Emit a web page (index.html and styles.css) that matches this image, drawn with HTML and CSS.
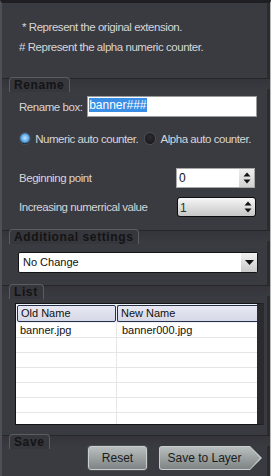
FILE: index.html
```html
<!DOCTYPE html>
<html lang="en">
<head>
    <meta charset="UTF-8">
    <meta name="viewport" content="width=device-width, initial-scale=1.0">
    <title>Rename</title>
    <link rel="stylesheet" href="styles.css">
</head>
<body>
    <div class="panel">
        <div class="notes">
            <p class="note note-star">* Represent the original extension.</p>
            <p class="note"># Represent the alpha numeric counter.</p>
        </div>

        <div class="section-head"><span class="tab">Rename</span></div>
        <div class="section rename">
            <div class="field-row">
                <span class="label">Rename box:</span>
                <div class="text-input"><span class="selected">banner###</span></div>
            </div>
            <div class="radio-row">
                <span class="radio on"></span><span class="radio-label">Numeric auto counter.</span>
                <span class="radio"></span><span class="radio-label">Alpha auto counter.</span>
            </div>
            <div class="spin-row begin-row">
                <span class="label">Beginning point</span>
                <div class="spin spin-white">
                    <span class="spin-val">0</span>
                    <span class="spin-btn">
                        <svg width="8" height="12" viewBox="0 0 8 12"><path d="M4 0.5 L7.5 4.5 H0.5 Z M4 11.5 L7.5 7.5 H0.5 Z" fill="#111"/></svg>
                    </span>
                </div>
            </div>
            <div class="spin-row step-row">
                <span class="label">Increasing numerrical value</span>
                <div class="spin spin-gray">
                    <span class="spin-val green">1</span>
                    <span class="spin-btn">
                        <svg width="8" height="12" viewBox="0 0 8 12"><path d="M4 0.5 L7.5 4.5 H0.5 Z M4 11.5 L7.5 7.5 H0.5 Z" fill="#111"/></svg>
                    </span>
                </div>
            </div>
        </div>

        <div class="section-head"><span class="tab">Additional settings</span></div>
        <div class="section additional">
            <div class="select">
                <span class="select-val">No Change</span>
                <span class="select-btn">
                    <svg width="9" height="5" viewBox="0 0 9 5"><path d="M0 0 H9 L4.5 5 Z" fill="#111"/></svg>
                </span>
            </div>
        </div>

        <div class="section-head"><span class="tab">List</span></div>
        <div class="section list">
            <div class="list-box">
                <div class="list-header">
                    <span class="head-cell col-old">Old Name</span>
                    <span class="head-cell col-new">New Name</span>
                </div>
                <div class="list-row">
                    <span class="cell col-old">banner.jpg</span>
                    <span class="cell col-new">banner000.jpg</span>
                </div>
                <div class="list-row"><span class="cell col-old"></span><span class="cell col-new"></span></div>
                <div class="list-row"><span class="cell col-old"></span><span class="cell col-new"></span></div>
                <div class="list-row"><span class="cell col-old"></span><span class="cell col-new"></span></div>
                <div class="list-row"><span class="cell col-old"></span><span class="cell col-new"></span></div>
                <div class="list-row"><span class="cell col-old"></span><span class="cell col-new"></span></div>
                <div class="list-row"><span class="cell col-old"></span><span class="cell col-new"></span></div>
            </div>
        </div>

        <div class="section-head"><span class="tab">Save</span></div>
        <div class="section save">
            <button class="btn">Reset</button>
            <div class="btn-arrow-wrap">
                <button class="btn-arrow">Save to Layer</button>
            </div>
        </div>
    </div>
</body>
</html>
```

FILE: styles.css
```css
body {
    margin: 0;
    padding: 0;
    background-color: #3a3a41;
}
.panel {
    width: 271px;
    height: 476px;
    box-sizing: border-box;
    background-color: #3a3a41;
    border-top: 3px solid #1f1f23;
    border-left: 2px solid #4f4f56;
    border-right: 1px solid #b8b8b8;
    box-shadow: inset -3px 0 0 #2b2b30;
    overflow: hidden;
    color: #d6d6d6;
    font-family: 'Liberation Sans', Arial, sans-serif;
    font-size: 11.5px;
    letter-spacing: -0.45px;
    white-space: nowrap;
}
.notes {
    padding: 14px 0 21px 17px;
    height: 75px;
    box-sizing: border-box;
}
.note {
    margin: 0;
    line-height: 20px;
    height: 20px;
}
.note-star {
    padding-left: 3px;
}
.section-head {
    border-top: 1px solid #26262b;
    height: 10px;
    padding-left: 7px;
    background: linear-gradient(#34343a, #393940);
}
.tab {
    display: inline-block;
    margin-top: -5px;
    height: 15px;
    box-sizing: border-box;
    padding: 1px 5px 0 4px;
    border: 1px solid #5b5b62;
    border-bottom: none;
    border-radius: 4px 4px 0 0;
    background-color: #36363d;
    color: #141414;
    font-weight: bold;
    font-size: 12px;
    letter-spacing: 0.6px;
    line-height: 13px;
}
.section {
    padding: 0 13px 0 15px;
}
.rename {
    padding-top: 7px;
    height: 141px;
    box-sizing: border-box;
}
.field-row {
    display: flex;
    align-items: center;
    height: 21px;
    padding-left: 2px;
}
.field-row .label {
    width: 69px;
}
.text-input {
    width: 172px;
    height: 21px;
    box-sizing: border-box;
    background-color: #fff;
    border: 1px solid #9a9a9a;
    padding: 2px 0 0 1px;
    font-size: 12px;
    letter-spacing: 0;
    line-height: 13px;
}
.selected {
    background-color: #3a8ee6;
    color: #fff;
}
.radio-row {
    display: flex;
    align-items: center;
    height: 13px;
    margin-top: 15px;
    padding-left: 2px;
}
.radio {
    width: 13px;
    height: 13px;
    box-sizing: border-box;
    border-radius: 50%;
    background: radial-gradient(circle at 50% 40%, #2c2c30, #151518);
    border: 1px solid #4a4a50;
    margin-right: 4px;
}
.radio.on {
    background: radial-gradient(circle at 50% 45%, #bfe4ff 0, #62aeea 45%, #2b5d8c 70%, #18181b 72%);
}
.radio-label {
    margin-right: 6px;
}
.spin-row {
    display: flex;
    align-items: center;
    justify-content: space-between;
    height: 20px;
    padding-left: 2px;
    padding-right: 2px;
}
.begin-row {
    margin-top: 23px;
}
.step-row {
    margin-top: 9px;
    padding-right: 1px;
}
.spin {
    display: flex;
    width: 79px;
    height: 20px;
    box-sizing: border-box;
    font-size: 12px;
    letter-spacing: 0;
    color: #111;
}
.spin-white {
    background-color: #fff;
    border: 1px solid #a8a8a8;
}
.spin-gray {
    background: linear-gradient(#f6f6f6, #c6c6c6);
    border: 1px solid #0e0e0e;
    border-radius: 3px;
}
.spin-val {
    flex: 1;
    padding-left: 2px;
    line-height: 18px;
}
.spin-val.green {
    padding-top: 1px;
    color: #1d3a1d;
}
.spin-btn {
    width: 15px;
    display: flex;
    align-items: center;
    justify-content: center;
}
.spin-white .spin-btn {
    background: linear-gradient(#eeeeee, #d2d2d2);
}
.additional {
    padding-top: 11px;
    height: 44px;
    box-sizing: border-box;
}
.select {
    display: flex;
    width: 240px;
    height: 21px;
    margin-left: 1px;
    box-sizing: border-box;
    background-color: #fff;
    border: 1px solid #141414;
    border-radius: 2px;
    font-size: 11px;
    letter-spacing: 0;
    color: #111;
}
.select-val {
    flex: 1;
    padding-left: 4px;
    line-height: 19px;
}
.select-btn {
    width: 16px;
    display: flex;
    align-items: center;
    justify-content: center;
    background: linear-gradient(#f2f2f2, #cacaca);
}
.list {
    padding-top: 7px;
    padding-left: 13px;
    padding-right: 6px;
    height: 139px;
    box-sizing: border-box;
}
.list-box {
    height: 122px;
    box-sizing: border-box;
    border: 1px solid #141414;
    border-right: 7px solid #2a2a2f;
    background-color: #fff;
    overflow: hidden;
    font-size: 11px;
    letter-spacing: 0;
    color: #111;
}
.list-header {
    display: flex;
    height: 18px;
    padding: 1px 0 0 1px;
    background-color: #eef0f8;
}
.head-cell {
    box-sizing: border-box;
    height: 17px;
    line-height: 15px;
    padding-left: 3px;
    border: 1px solid #25324a;
    border-radius: 2px;
    background: linear-gradient(#e8e9f3, #d6d8e6);
}
.col-old {
    width: 99px;
}
.col-new {
    flex: 1;
}
.head-cell.col-new {
    margin-left: 1px;
    border-right: none;
    border-radius: 2px 0 0 2px;
}
.list-row {
    display: flex;
    height: 15px;
    box-sizing: border-box;
    border-bottom: 1px solid #e6e6e6;
}
.list-row:first-of-type {
    height: 16px;
}
.cell {
    padding-left: 4px;
    line-height: 15px;
}
.cell.col-old {
    width: 96px;
    border-right: 1px solid #e6e6e6;
}
.cell.col-new {
    padding-left: 5px;
}
.save {
    display: flex;
    justify-content: flex-end;
    align-items: flex-start;
    gap: 12px;
    padding-right: 8px;
}
.btn,
.btn-arrow {
    font-family: 'Liberation Sans', Arial, sans-serif;
    font-size: 12px;
    letter-spacing: 0;
    color: #1c1c1c;
    cursor: pointer;
}
.btn {
    width: 59px;
    height: 24px;
    border: 1px solid #c9cdcd;
    border-radius: 3px;
    background: linear-gradient(#b9bebe, #7e8484);
    box-shadow: 0 0 0 1px #4a4d4e;
    padding: 0;
}
.btn-arrow-wrap {
    width: 103px;
    height: 24px;
    padding: 1px;
    box-sizing: border-box;
    background-color: #c9cdcd;
    clip-path: polygon(0 0, 91px 0, 103px 50%, 91px 100%, 0 100%);
    border-radius: 3px 0 0 3px;
}
.btn-arrow {
    display: block;
    width: 101px;
    height: 22px;
    border: none;
    padding: 0 12px 0 0;
    border-radius: 2px 0 0 2px;
    background: linear-gradient(#b9bebe, #7e8484);
    clip-path: polygon(0 0, 90px 0, 100px 50%, 90px 100%, 0 100%);
}
```
